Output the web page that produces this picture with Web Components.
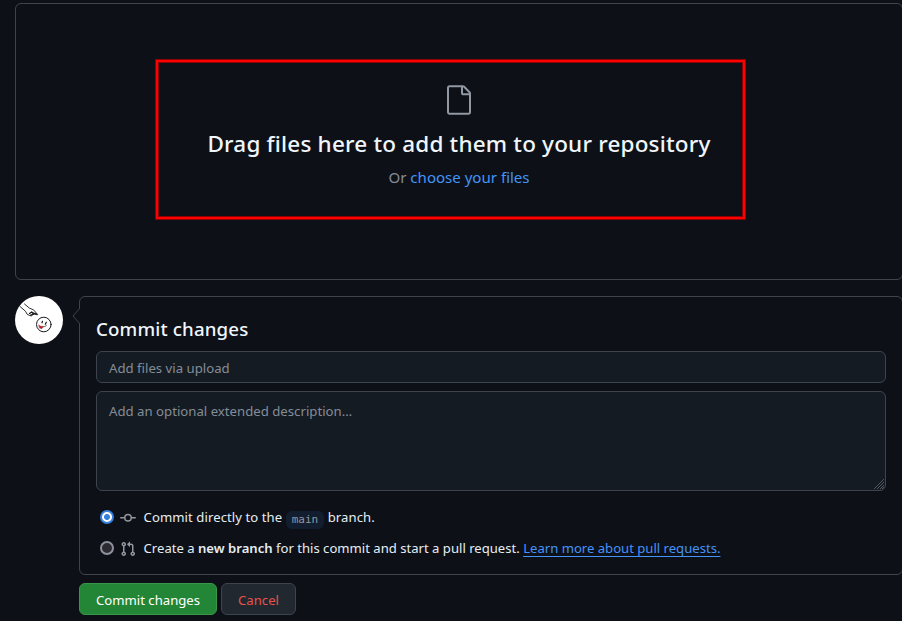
<!DOCTYPE html>
<html lang="en"><head><meta charset="utf-8"><title>Upload files</title>
<style>html,body{margin:0;background:#0d1117;overflow:hidden;height:621px}body{font-family:"Noto Sans",sans-serif;font-size:14px;line-height:21px;color:#e6edf3}</style></head><body>
<upload-page></upload-page>
<script>
const define=(name,html)=>customElements.define(name,class extends HTMLElement{constructor(){super();this.attachShadow({mode:'open'}).innerHTML=html}});
define('file-drop',`<style>
:host{display:flex;box-sizing:border-box;width:888px;height:277px;border:1px solid #3d444d;border-radius:6px;position:relative;flex-direction:column;align-items:center;padding-top:80px}
svg{width:32px;height:32px;fill:#9198a1;flex:none}
h2{margin:10px 0 0;font-size:22.5px;letter-spacing:.19px;line-height:36px;font-weight:500;color:#f0f6fc;white-space:nowrap}
p{margin:4px 0 0;font-size:15.05px;line-height:22px;color:#848d97}a{color:#4493f8;text-decoration:none}
.mark{position:absolute;box-sizing:border-box;left:139px;top:55px;width:591px;height:161px;border:4px solid #8b0204;border-radius:1px}
.mark:before{content:"";position:absolute;inset:-3px;border:2px solid #f00}
</style><svg viewBox="0 0 24 24"><path d="M3 3a2 2 0 0 1 2-2h9.982a2 2 0 0 1 1.414.586l4.018 4.018A2 2 0 0 1 21 7.018V21a2 2 0 0 1-2 2H4.75A1.75 1.75 0 0 1 3 21.25Zm1.75-.5a.25.25 0 0 0-.25.25v18.5c0 .138.112.25.25.25h14.5a.25.25 0 0 0 .25-.25V8.5h-4a2 2 0 0 1-2-2v-4Zm10.25 0v4a.5.5 0 0 0 .5.5h4a.25.25 0 0 0-.146-.336l-4.018-4.018A.25.25 0 0 0 15 2.5Z"/></svg><h2><slot name="title"></slot></h2><p>Or <a>choose your files</a></p><span class="mark"></span>`);
define('user-avatar',`<style>:host{display:block;width:48px;height:48px;flex:none}svg{display:block}</style>
<svg width="48" height="48" viewBox="0 0 48 48" fill="none" stroke="#17191c" stroke-linecap="round" stroke-linejoin="round"><circle cx="24" cy="24" r="24" fill="#fff" stroke="none"/><path stroke-width=".9" d="M5 10.5l5.5 4.8q1 3.6 4.3 4.3 2 .9 2.8-.6M9.5 8l5 4.2 4 1.6 4.2 4.8q-.8.6-4-.9"/><path stroke-width="1.3" d="M14.5 17.5l2.2-1.5 2 2.2-3 .9M18.5 17l3 1.2"/><circle cx="28.8" cy="28.5" r="7.3" stroke-width="1"/><path stroke-width="1.2" d="M27 26.8l.5-1.5M31.3 26.2l-1 2"/><path stroke-width=".7" d="M27.5 31q2.5 0 3.8-1.4"/><path d="M23.8 29q1.8 2 4.4 1.3l-1.4 2.5-2.2-.8z" fill="#c51827" stroke="#8a1720" stroke-width=".4"/></svg>`);
define('radio-row',`<style>:host{display:flex;align-items:center;height:21px;white-space:nowrap;font-size:13.1px}
i{box-sizing:border-box;width:14px;height:14px;border-radius:50%;border:2px solid #8f8f9d;background:#2b2a33;margin:0 6px 1px 0;flex:none}
:host([checked]) i{border:2px solid #357fe0;background:radial-gradient(circle,#357fe0 0 2.6px,#fff 3.3px)}
svg{width:16px;height:16px;fill:#9198a1;margin:0 7.6px 0 0;flex:none;position:relative;top:.5px}.pr{display:none}:host([kind=pr]) .pr{display:block}:host([kind=pr]) .ci{display:none}
</style><i></i><svg class="ci" viewBox="0 0 16 16"><path d="M11.93 8.5a4.002 4.002 0 0 1-7.86 0H.75a.75.75 0 0 1 0-1.5h3.32a4.002 4.002 0 0 1 7.86 0h3.32a.75.75 0 0 1 0 1.5Zm-1.43-.75a2.5 2.5 0 1 0-5 0 2.5 2.5 0 0 0 5 0Z"/></svg><svg class="pr" viewBox="0 0 16 16"><path d="M1.5 3.25a2.25 2.25 0 1 1 3 2.122v5.256a2.251 2.251 0 1 1-1.5 0V5.372A2.25 2.25 0 0 1 1.5 3.25Zm5.677-.177L9.573.677A.25.25 0 0 1 10 .854V2.5h1A2.5 2.5 0 0 1 13.5 5v5.628a2.251 2.251 0 1 1-1.5 0V5a1 1 0 0 0-1-1h-1v1.646a.25.25 0 0 1-.427.177L7.177 3.427a.25.25 0 0 1 0-.354ZM3.75 2.5a.75.75 0 1 0 0 1.5.75.75 0 0 0 0-1.5Zm0 9.5a.75.75 0 1 0 0 1.5.75.75 0 0 0 0-1.5Zm8.25.75a.75.75 0 1 0 1.5 0 .75.75 0 0 0-1.5 0Z"/></svg><span><slot></slot></span>`);
define('commit-form',`<style>
:host{display:block;box-sizing:border-box;width:824px;height:279px;border:1px solid #3d444d;border-radius:6px;padding:16px;position:relative;flex:none;font-size:13.2px}
.tip{position:absolute;left:-8px;top:11px;width:8px;height:16px}
h3{margin:0 0 7px;padding-top:1px;font-size:18.7px;letter-spacing:.14px;line-height:30px;height:30px;font-weight:500;color:#f0f6fc}
.in{box-sizing:border-box;width:790px;border:1px solid #3d444d;border-radius:6px;background:#151b23;color:#848d97;padding:5px 12px;line-height:22px;position:relative}
.one{height:32px}.two{height:100px;margin:8px 0 16px;padding-top:8px}.grip{position:absolute;right:0;bottom:0}
radio-row{margin-left:4px}radio-row+radio-row{margin-top:10px}
.direct{letter-spacing:.08px}
code{font:11px/17px "DejaVu Sans Mono",monospace;letter-spacing:0;color:#9198a1;background:#121d2f;border-radius:6px;padding:2px 6px 3px;margin:0;vertical-align:-1px}
a{color:#4493f8;text-decoration:underline;text-underline-offset:3px}b{font-weight:600}
</style><svg class="tip" viewBox="0 0 8 16"><path d="M8 0L1 8l7 8" fill="#0d1117" stroke="#3d444d"/></svg>
<h3>Commit changes</h3><div class="in one">Add files via upload</div><div class="in two">Add an optional extended description…<svg class="grip" width="12" height="12" stroke="#6b7078" stroke-width=".7"><path d="M1 11L11 1M4 11l7-7M7 11l4-4M9 11l2-2"/></svg></div>
<radio-row class="direct" checked>Commit directly to the <code>main</code> branch.</radio-row><radio-row kind="pr">Create a <b>new branch</b> for this commit and start a pull request. <a>Learn more about pull requests.</a></radio-row>`);
define('git-button',`<style>:host{display:flex;box-sizing:border-box;width:75px;height:32px;border:1px solid #3d444d;border-radius:6px;background:#212830;color:#e5534b;align-items:center;justify-content:center;font-size:13.15px;padding-top:2px}:host([primary]){width:138px;background:#238636;border-color:#3a9649;color:#fff}</style><slot></slot>`);
define('upload-page',`<style>:host{display:block;padding:3px 0 0 15px}.row{display:flex;gap:16px;margin-top:16px}.acts{display:flex;gap:4px;margin:8px 0 0 64px}</style>
<file-drop><span slot="title">Drag files here to add them to your repository</span></file-drop>
<div class="row"><user-avatar></user-avatar><commit-form></commit-form></div>
<div class="acts"><git-button primary>Commit changes</git-button><git-button>Cancel</git-button></div>`);
</script></body></html>
